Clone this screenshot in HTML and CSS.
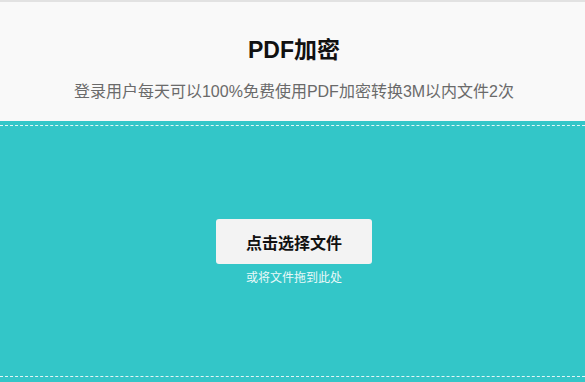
FILE: index.html
```html
<!DOCTYPE html>
<html lang="zh">
<head>
<meta charset="utf-8">
<title>PDF加密</title>
<link rel="stylesheet" href="styles.css">
</head>
<body>
<header class="hero">
  <h1 class="title">PDF加密</h1>
  <p class="subtitle">登录用户每天可以100%免费使用PDF加密转换3M以内文件2次</p>
</header>
<section class="upload">
  <div class="drop">
    <button class="pick" type="button">点击选择文件</button>
    <p class="hint">或将文件拖到此处</p>
  </div>
</section>
</body>
</html>
```
FILE: styles.css
```css
html, body {
  margin: 0;
  padding: 0;
}
body {
  font-family: "Liberation Sans", "Noto Sans CJK SC", sans-serif;
  background: #33c6c8;
  overflow: hidden;
}
.hero {
  background: #f9f9f9;
  border-top: 2px solid #e2e2e2;
  height: 119px;
  display: flex;
  flex-direction: column;
  align-items: center;
  padding-left: 3px;
  box-sizing: content-box;
}
.title {
  margin: 33px 0 0;
  font-size: 23px;
  line-height: 30px;
  font-weight: bold;
  color: #111;
}
.subtitle {
  margin: 16px 0 0;
  font-size: 16px;
  line-height: 22px;
  color: #6a6a6a;
}
.upload {
  background: #33c6c8;
  padding: 4px 0 5px;
}
.drop {
  border-top: 1px dashed rgba(255, 255, 255, 0.85);
  border-bottom: 1px dashed rgba(255, 255, 255, 0.85);
  height: 250px;
  display: flex;
  flex-direction: column;
  align-items: center;
  padding-left: 3px;
}
.pick {
  margin-top: 93px;
  width: 156px;
  height: 45px;
  border: none;
  border-radius: 3px;
  background: #f3f3f3;
  font-family: "Liberation Sans", "Noto Sans CJK SC", sans-serif;
  font-size: 16px;
  font-weight: bold;
  color: #111;
  padding: 0;
}
.hint {
  margin: 6px 0 0;
  font-size: 12px;
  line-height: 16px;
  color: #e9f9f9;
}
```
